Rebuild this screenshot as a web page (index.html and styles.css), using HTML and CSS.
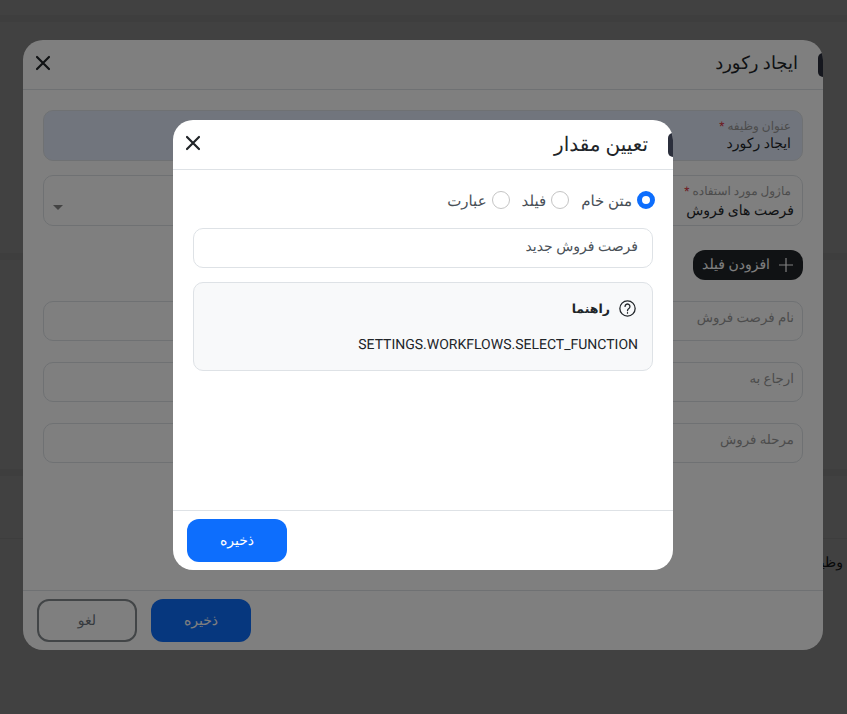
FILE: index.html
```html
<!DOCTYPE html>
<html lang="fa" dir="rtl">
<head>
    <meta charset="UTF-8">
    <meta name="viewport" content="width=device-width, initial-scale=1.0">
    <title>ایجاد رکورد</title>
    <link rel="stylesheet" href="styles.css">
</head>
<body>
    <!-- page behind the dialogs -->
    <div class="page">
        <div class="page-top"></div>
        <div class="page-section section-one"></div>
        <div class="page-section section-two"></div>
        <div class="page-section section-three">
            <div class="page-row"><span class="page-label">وظیفه</span></div>
        </div>
    </div>

    <!-- first dialog -->
    <div class="backdrop first">
        <div class="modal outer">
            <header class="modal-head">
                <span class="head-tab"></span>
                <h2 class="modal-title">ایجاد رکورد</h2>
                <svg class="close" viewBox="0 0 16 16"><path d="M2 2 14 14M14 2 2 14"/></svg>
            </header>
            <div class="outer-body">
                <div class="field filled tinted">
                    <label>عنوان وظیفه <i>*</i></label>
                    <div class="value">ایجاد رکورد</div>
                </div>
                <div class="field filled select">
                    <label>ماژول مورد استفاده <i>*</i></label>
                    <div class="value">فرصت های فروش</div>
                    <span class="caret"></span>
                </div>
                <button class="add-field">
                    <svg viewBox="0 0 16 16"><path d="M8 1v14M1 8h14"/></svg>
                    افزودن فیلد
                </button>
                <div class="field empty">نام فرصت فروش</div>
                <div class="field empty">ارجاع به</div>
                <div class="field empty">مرحله فروش</div>
            </div>
            <footer class="outer-foot">
                <button class="btn primary">ذخیره</button>
                <button class="btn ghost">لغو</button>
            </footer>
        </div>
    </div>

    <!-- second dialog -->
    <div class="backdrop">
        <div class="modal inner">
            <header class="modal-head">
                <span class="head-tab"></span>
                <h2 class="modal-title">تعیین مقدار</h2>
                <svg class="close" viewBox="0 0 16 16"><path d="M2 2 14 14M14 2 2 14"/></svg>
            </header>
            <div class="inner-body">
                <div class="radios">
                    <div class="radio checked"><span class="dot"></span>متن خام</div>
                    <div class="radio"><span class="dot"></span>فیلد</div>
                    <div class="radio"><span class="dot"></span>عبارت</div>
                </div>
                <div class="text-box">فرصت فروش جدید</div>
                <div class="help">
                    <div class="help-title">
                        <svg viewBox="0 0 16 16"><circle cx="8" cy="8" r="7.2"/><path d="M5.7 6.1a2.3 2.3 0 1 1 3.6 1.9c-.9.6-1.3 1-1.3 2"/><path d="M8 12v.4"/></svg>
                        راهنما
                    </div>
                    <div class="help-text" dir="ltr">SETTINGS.WORKFLOWS.SELECT_FUNCTION</div>
                </div>
            </div>
            <footer class="inner-foot">
                <button class="btn primary">ذخیره</button>
            </footer>
        </div>
    </div>
</body>
</html>
```

FILE: styles.css
```css
* {
    margin: 0;
    padding: 0;
    box-sizing: border-box;
    font-family: Roboto, "DejaVu Sans", sans-serif;
    text-rendering: geometricPrecision;
}

html, body {
    height: 100%;
    overflow: hidden;
}

body {
    position: relative;
    background-color: #f4f4f4;
    color: #212529;
}

/* page behind the dialogs */
.page {
    height: 100%;
    display: flex;
    flex-direction: column;
}

.page-top {
    height: 15px;
    margin-bottom: 7px;
    background-color: #fff;
}

.page-section {
    background-color: #fff;
    margin-bottom: 7px;
}

.section-one {
    height: 231px;
}

.section-two {
    height: 209px;
}

.section-three {
    flex: 1;
    margin-bottom: 0;
    padding-top: 62px;
}

.page-row {
    height: 49px;
    display: flex;
    align-items: center;
    border-top: 1px solid #f0f0f0;
    padding-right: 4px;
}

.page-label {
    font-size: 14px;
    font-weight: 500;
}

.backdrop {
    position: absolute;
    inset: 0;
    background-color: rgba(0, 0, 0, 0.5);
}

.backdrop.first {
    background-color: rgba(0, 0, 0, 0.49);
}

.modal {
    position: absolute;
    background-color: #fff;
    border-radius: 20px;
    overflow: hidden;
    display: flex;
    flex-direction: column;
}

.outer {
    left: 23px;
    top: 40px;
    width: 800px;
    height: 610px;
}

.inner {
    left: 173px;
    top: 120px;
    width: 500px;
    height: 450px;
}

.modal-head {
    position: relative;
    height: 50px;
    flex-shrink: 0;
    display: flex;
    align-items: center;
    justify-content: space-between;
    padding: 0 25px 4px 12px;
    border-bottom: 1px solid #dee2e6;
}

.head-tab {
    position: absolute;
    right: 0;
    top: 13px;
    width: 5px;
    height: 24px;
    background-color: #2b2f3c;
    border-radius: 5px 0 0 5px;
}

.modal-title {
    margin-top: 2px;
    font-size: 18px;
    font-weight: 500;
}

.inner .modal-title {
    font-size: 20px;
}

.close {
    width: 16px;
    height: 16px;
    fill: none;
    stroke: #212529;
    stroke-width: 2.2;
    stroke-linecap: round;
}

.outer-body {
    flex: 1;
    padding: 20px;
}

.field {
    position: relative;
    border: 1px solid #dee2e6;
    border-radius: 10px;
    padding: 0 8px;
}

.field.filled {
    height: 51px;
    padding-top: 8px;
    margin-bottom: 14px;
}

.field.select {
    margin-bottom: 24px;
}

.field.tinted {
    background-color: #e3ebfa;
}

.field label {
    display: block;
    margin-right: 3px;
    font-size: 12px;
    color: #999;
}

.field label i {
    font-style: normal;
    color: #dc3545;
}

.value {
    margin: 1px 3px 0 0;
    font-size: 14px;
    line-height: 20px;
}

.select .value {
    margin: 3px 0 0;
}

.caret {
    position: absolute;
    left: 9px;
    top: 29px;
    border: 5px solid transparent;
    border-top-color: #888;
    border-bottom: 0;
}

.add-field {
    display: flex;
    align-items: center;
    gap: 8px;
    height: 30px;
    padding: 0 9px;
    margin: 0 0 21px auto;
    border: none;
    border-radius: 12px;
    background-color: #212529;
    color: #fff;
    font-size: 14px;
    font-weight: 500;
}

.add-field svg {
    width: 16px;
    height: 16px;
    fill: none;
    stroke: #fff;
    stroke-width: 1.2;
}

.field.empty {
    height: 40px;
    margin-bottom: 21px;
    line-height: 34px;
    font-size: 13.33px;
    color: #999;
}

.outer-foot {
    height: 60px;
    flex-shrink: 0;
    border-top: 1px solid #dee2e6;
    display: flex;
    flex-direction: row-reverse;
    align-items: center;
    gap: 14px;
    padding: 0 14px;
    direction: ltr;
    justify-content: flex-end;
}

.btn {
    width: 100px;
    height: 43px;
    border-radius: 12px;
    border: none;
    font-size: 14px;
    font-weight: 500;
}

.btn.primary {
    background-color: #0d6efd;
    color: #fff;
}

.btn.ghost {
    background-color: transparent;
    border: 2px solid #848a8e;
    color: #6c757d;
}

.inner-body {
    flex: 1;
    padding: 20px;
}

.radios {
    display: flex;
    gap: 12px;
    height: 20px;
    margin: 0 -2px 18px 0;
}

.radio {
    display: flex;
    align-items: center;
    gap: 5px;
    padding-top: 2px;
    font-size: 15px;
    color: #495057;
}

.dot {
    width: 18px;
    height: 18px;
    margin-top: -2px;
    border-radius: 50%;
    border: 1px solid #c4c4c4;
    background-color: #fff;
}

.radio.checked .dot {
    border: 5px solid #0d6efd;
}

.text-box {
    height: 40px;
    border: 1px solid #dee2e6;
    border-radius: 10px;
    padding: 0 14px;
    line-height: 36px;
    font-size: 14px;
    color: #495057;
    margin-bottom: 14px;
}

.help {
    height: 89px;
    border: 1px solid #dee2e6;
    border-radius: 10px;
    background-color: #f8f9fa;
    padding: 17px 14px;
}

.help-title {
    display: flex;
    align-items: center;
    gap: 9px;
    margin: 0 2px 20px 0;
    font-size: 12.5px;
    font-weight: 700;
}

.help-title svg {
    width: 17px;
    height: 17px;
    fill: none;
    stroke: #212529;
    stroke-width: 1.2;
    stroke-linecap: round;
}

.help-text {
    font-size: 14px;
    text-align: right;
}

.inner-foot {
    height: 60px;
    flex-shrink: 0;
    border-top: 1px solid #dee2e6;
    display: flex;
    justify-content: flex-end;
    align-items: center;
    padding: 0 14px;
}
```
